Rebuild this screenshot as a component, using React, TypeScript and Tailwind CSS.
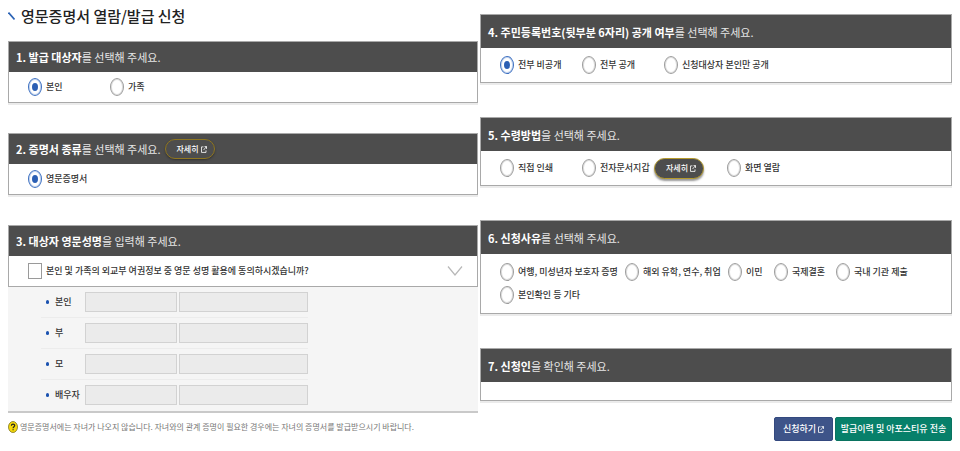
import { useState, type ReactNode } from "react";

function ExternalIcon({ className = "" }: { className?: string }) {
  return (
    <svg viewBox="0 0 12 12" className={`h-[7px] w-[6px] ${className}`} fill="none" stroke="currentColor" strokeWidth="1.5" preserveAspectRatio="none" aria-hidden="true">
      <path d="M5 1.5H1v9.5h9V7.5" />
      <path d="M7 1h4v4M11 1 5 7" />
    </svg>
  );
}

function DetailButton({ className }: { className: string }) {
  return (
    <button
      type="button"
      className={`flex items-center justify-center gap-[2px] rounded-full border bg-[#4d4d4d] pl-1 text-[8px] font-medium text-white ${className}`}
    >
      자세히
      <ExternalIcon />
    </button>
  );
}

type SectionProps = {
  title: string;
  rest: string;
  tall?: boolean;
  action?: ReactNode;
  children?: ReactNode;
};

function Section({ title, rest, tall = false, action, children }: SectionProps) {
  return (
    <section>
      <div className="border border-[#a9a9a9] shadow-[0_2px_0_#ebebeb]">
        <header className={`flex items-center bg-[#4d4d4d] pl-[7px] text-white ${tall ? "h-[33px]" : "h-[30px]"}`}>
          <h2 className="text-[11px] leading-4 font-normal text-[#e6e6e6]">
            <strong className="font-bold text-white">{title}</strong>
            {rest}
          </h2>
          {action}
        </header>
        {children}
      </div>
    </section>
  );
}

type ChoiceProps = {
  name: string;
  label: string;
  value: string;
  onSelect: (value: string) => void;
  className?: string;
};

function Choice({ name, label, value, onSelect, className = "" }: ChoiceProps) {
  return (
    <label className={`flex items-center gap-1 whitespace-nowrap ${className}`}>
      <input
        type="radio"
        name={name}
        checked={value === label}
        onChange={() => onSelect(label)}
        className="h-[18px] w-[14px] shrink-0 appearance-none rounded-[50%] border border-[#9c9c9c] bg-white bg-clip-content px-[3px] py-1 shadow-[inset_0_0_0_1px_#dedede] checked:border-[#3c6fc0] checked:bg-[#2b5fb4] checked:shadow-[inset_0_0_0_1px_#c9d8ef]"
      />
      {label}
    </label>
  );
}

const people = ["본인", "부", "모", "배우자"];

export default function App() {
  const [target, setTarget] = useState("본인");
  const [kind, setKind] = useState("영문증명서");
  const [disclosure, setDisclosure] = useState("전부 비공개");
  const [method, setMethod] = useState("");
  const [reason, setReason] = useState("");

  return (
    <main className="grid grid-cols-[470fr_472fr] gap-x-[2px] bg-white px-2 font-['Noto_Sans_CJK_KR',sans-serif] text-[9px] leading-3 font-medium text-[#333]">
      <div className="flex flex-col">
        <div className="flex h-[41px] items-center gap-[6px] pb-[9px]">
          <svg viewBox="0 0 7 8" className="h-2 w-[7px]" fill="none" stroke="#2b62b5" strokeWidth="1.6" aria-hidden="true">
            <path d="M0.5 0.5 6.5 7.5" />
          </svg>
          <h1 className="text-[15px] leading-5 font-medium text-[#222]">영문증명서 열람/발급 신청</h1>
        </div>

        <div className="flex flex-col gap-[30px]">
          <Section title="1. 발급 대상자" rest="를 선택해 주세요.">
            <div className="flex h-[30px] items-center pl-[19px]">
              <Choice name="target" label="본인" value={target} onSelect={setTarget} className="w-[82px]" />
              <Choice name="target" label="가족" value={target} onSelect={setTarget} />
            </div>
          </Section>

          <Section
            title="2. 증명서 종류"
            rest="를 선택해 주세요."
            action={<DetailButton className="ml-1 h-5 w-[50px] border-[#8f7620] shadow-[0_1px_2px_#333]" />}
          >
            <div className="flex h-[30px] items-center pl-[19px]">
              <Choice name="kind" label="영문증명서" value={kind} onSelect={setKind} />
            </div>
          </Section>

          <div>
            <Section title="3. 대상자 영문성명" rest="을 입력해 주세요.">
              <div className="flex h-[30px] items-center justify-between pr-[14px] pl-[19px]">
                <label className="flex items-center gap-1 whitespace-nowrap">
                  <input type="checkbox" className="h-4 w-[14px] appearance-none border border-[#9a9a9a] bg-white checked:bg-[#2b5fb4]" />
                  본인 및 가족의 외교부 여권정보 중 영문 성명 활용에 동의하시겠습니까?
                </label>
                <button type="button" aria-label="펼치기">
                  <svg viewBox="0 0 16 10" className="h-[10px] w-4" fill="none" stroke="#b8b8b8" strokeWidth="1.2" aria-hidden="true">
                    <path d="M1 0.5 8 9 15 0.5" />
                  </svg>
                </button>
              </div>
            </Section>
            <div className="border-b-2 border-[#c9c9c9] bg-[#f5f5f5] pl-[33px]">
              {people.map((person) => (
                <div key={person} className="flex h-[31px] w-[267px] items-center border-b border-[#ececec] last:border-transparent">
                  <span className="ml-[5px] h-[4px] w-[3px] rounded-full bg-[#1b52b0]" />
                  <span className="ml-[6px] w-[30px] whitespace-nowrap">{person}</span>
                  <div className="flex flex-1 gap-[2px]">
                    <input type="text" aria-label={`${person} 영문 성`} className="h-5 w-[92px] border border-[#d2d2d2] bg-[#ebebeb] px-1" />
                    <input type="text" aria-label={`${person} 영문 이름`} className="h-5 min-w-0 flex-1 border border-[#d2d2d2] bg-[#ebebeb] px-1" />
                  </div>
                </div>
              ))}
            </div>
          </div>
        </div>

        <p className="mt-2 flex items-center gap-[2px] text-[8px] font-normal whitespace-nowrap text-[#777]">
          <svg viewBox="0 0 10 12" className="h-3 w-[10px]" aria-hidden="true">
            <ellipse cx="5" cy="6" rx="4.5" ry="5.5" fill="#f5d90a" stroke="#7d7420" strokeWidth="0.8" />
            <path d="M3.4 4.7C3.4 2.6 6.7 2.6 6.7 4.6 6.7 5.7 5.1 5.8 5.1 7.2M5.1 8.2V9.3" fill="none" stroke="#222" strokeWidth="1.2" />
          </svg>
          영문증명서에는 자녀가 나오지 않습니다. 자녀와의 관계 증명이 필요한 경우에는 자녀의 증명서를 발급받으시기 바랍니다.
        </p>
      </div>

      <div className="flex flex-col pt-[14px]">
        <div className="flex flex-col gap-[34px]">
          <Section tall title="4. 주민등록번호(뒷부분 6자리) 공개 여부" rest="를 선택해 주세요.">
            <div className="flex h-[34px] items-center pl-[19px]">
              <Choice name="disclosure" label="전부 비공개" value={disclosure} onSelect={setDisclosure} className="w-[82px]" />
              <Choice name="disclosure" label="전부 공개" value={disclosure} onSelect={setDisclosure} className="w-[82px]" />
              <Choice name="disclosure" label="신청대상자 본인만 공개" value={disclosure} onSelect={setDisclosure} />
            </div>
          </Section>

          <Section tall title="5. 수령방법" rest="을 선택해 주세요.">
            <div className="flex h-[34px] items-center pl-[19px]">
              <Choice name="method" label="직접 인쇄" value={method} onSelect={setMethod} className="w-[82px]" />
              <Choice name="method" label="전자문서지갑" value={method} onSelect={setMethod} className="w-[72px]" />
              <DetailButton className="mr-[23px] h-[21px] w-[50px] border-[#b59a2c] shadow-[0_2px_2px_#999]" />
              <Choice name="method" label="화면 열람" value={method} onSelect={setMethod} />
            </div>
          </Section>

          <Section tall title="6. 신청사유" rest="를 선택해 주세요.">
            <div className="flex h-[59px] flex-wrap content-center items-center gap-y-[5px] pl-[19px]">
              <Choice name="reason" label="여행, 미성년자 보호자 증명" value={reason} onSelect={setReason} className="w-[125px]" />
              <Choice name="reason" label="해외 유학, 연수, 취업" value={reason} onSelect={setReason} className="w-[103px]" />
              <Choice name="reason" label="이민" value={reason} onSelect={setReason} className="w-[46px]" />
              <Choice name="reason" label="국제결혼" value={reason} onSelect={setReason} className="w-[62px]" />
              <Choice name="reason" label="국내 기관 제출" value={reason} onSelect={setReason} className="w-[100px]" />
              <Choice name="reason" label="본인확인 등 기타" value={reason} onSelect={setReason} />
            </div>
          </Section>

          <Section tall title="7. 신청인" rest="을 확인해 주세요.">
            <div className="h-[18px]" />
          </Section>
        </div>

        <div className="mt-4 flex justify-end gap-[2px] text-[9px] text-white">
          <button type="button" className="flex h-6 w-[59px] items-center justify-center gap-[2px] rounded-[2px] border border-[#34497f] bg-[#3e5489]">
            신청하기
            <ExternalIcon />
          </button>
          <button type="button" className="h-6 w-[117px] rounded-[2px] border border-[#0a7360] bg-[#07806a]">
            발급이력 및 아포스티유 전송
          </button>
        </div>
      </div>
    </main>
  );
}
